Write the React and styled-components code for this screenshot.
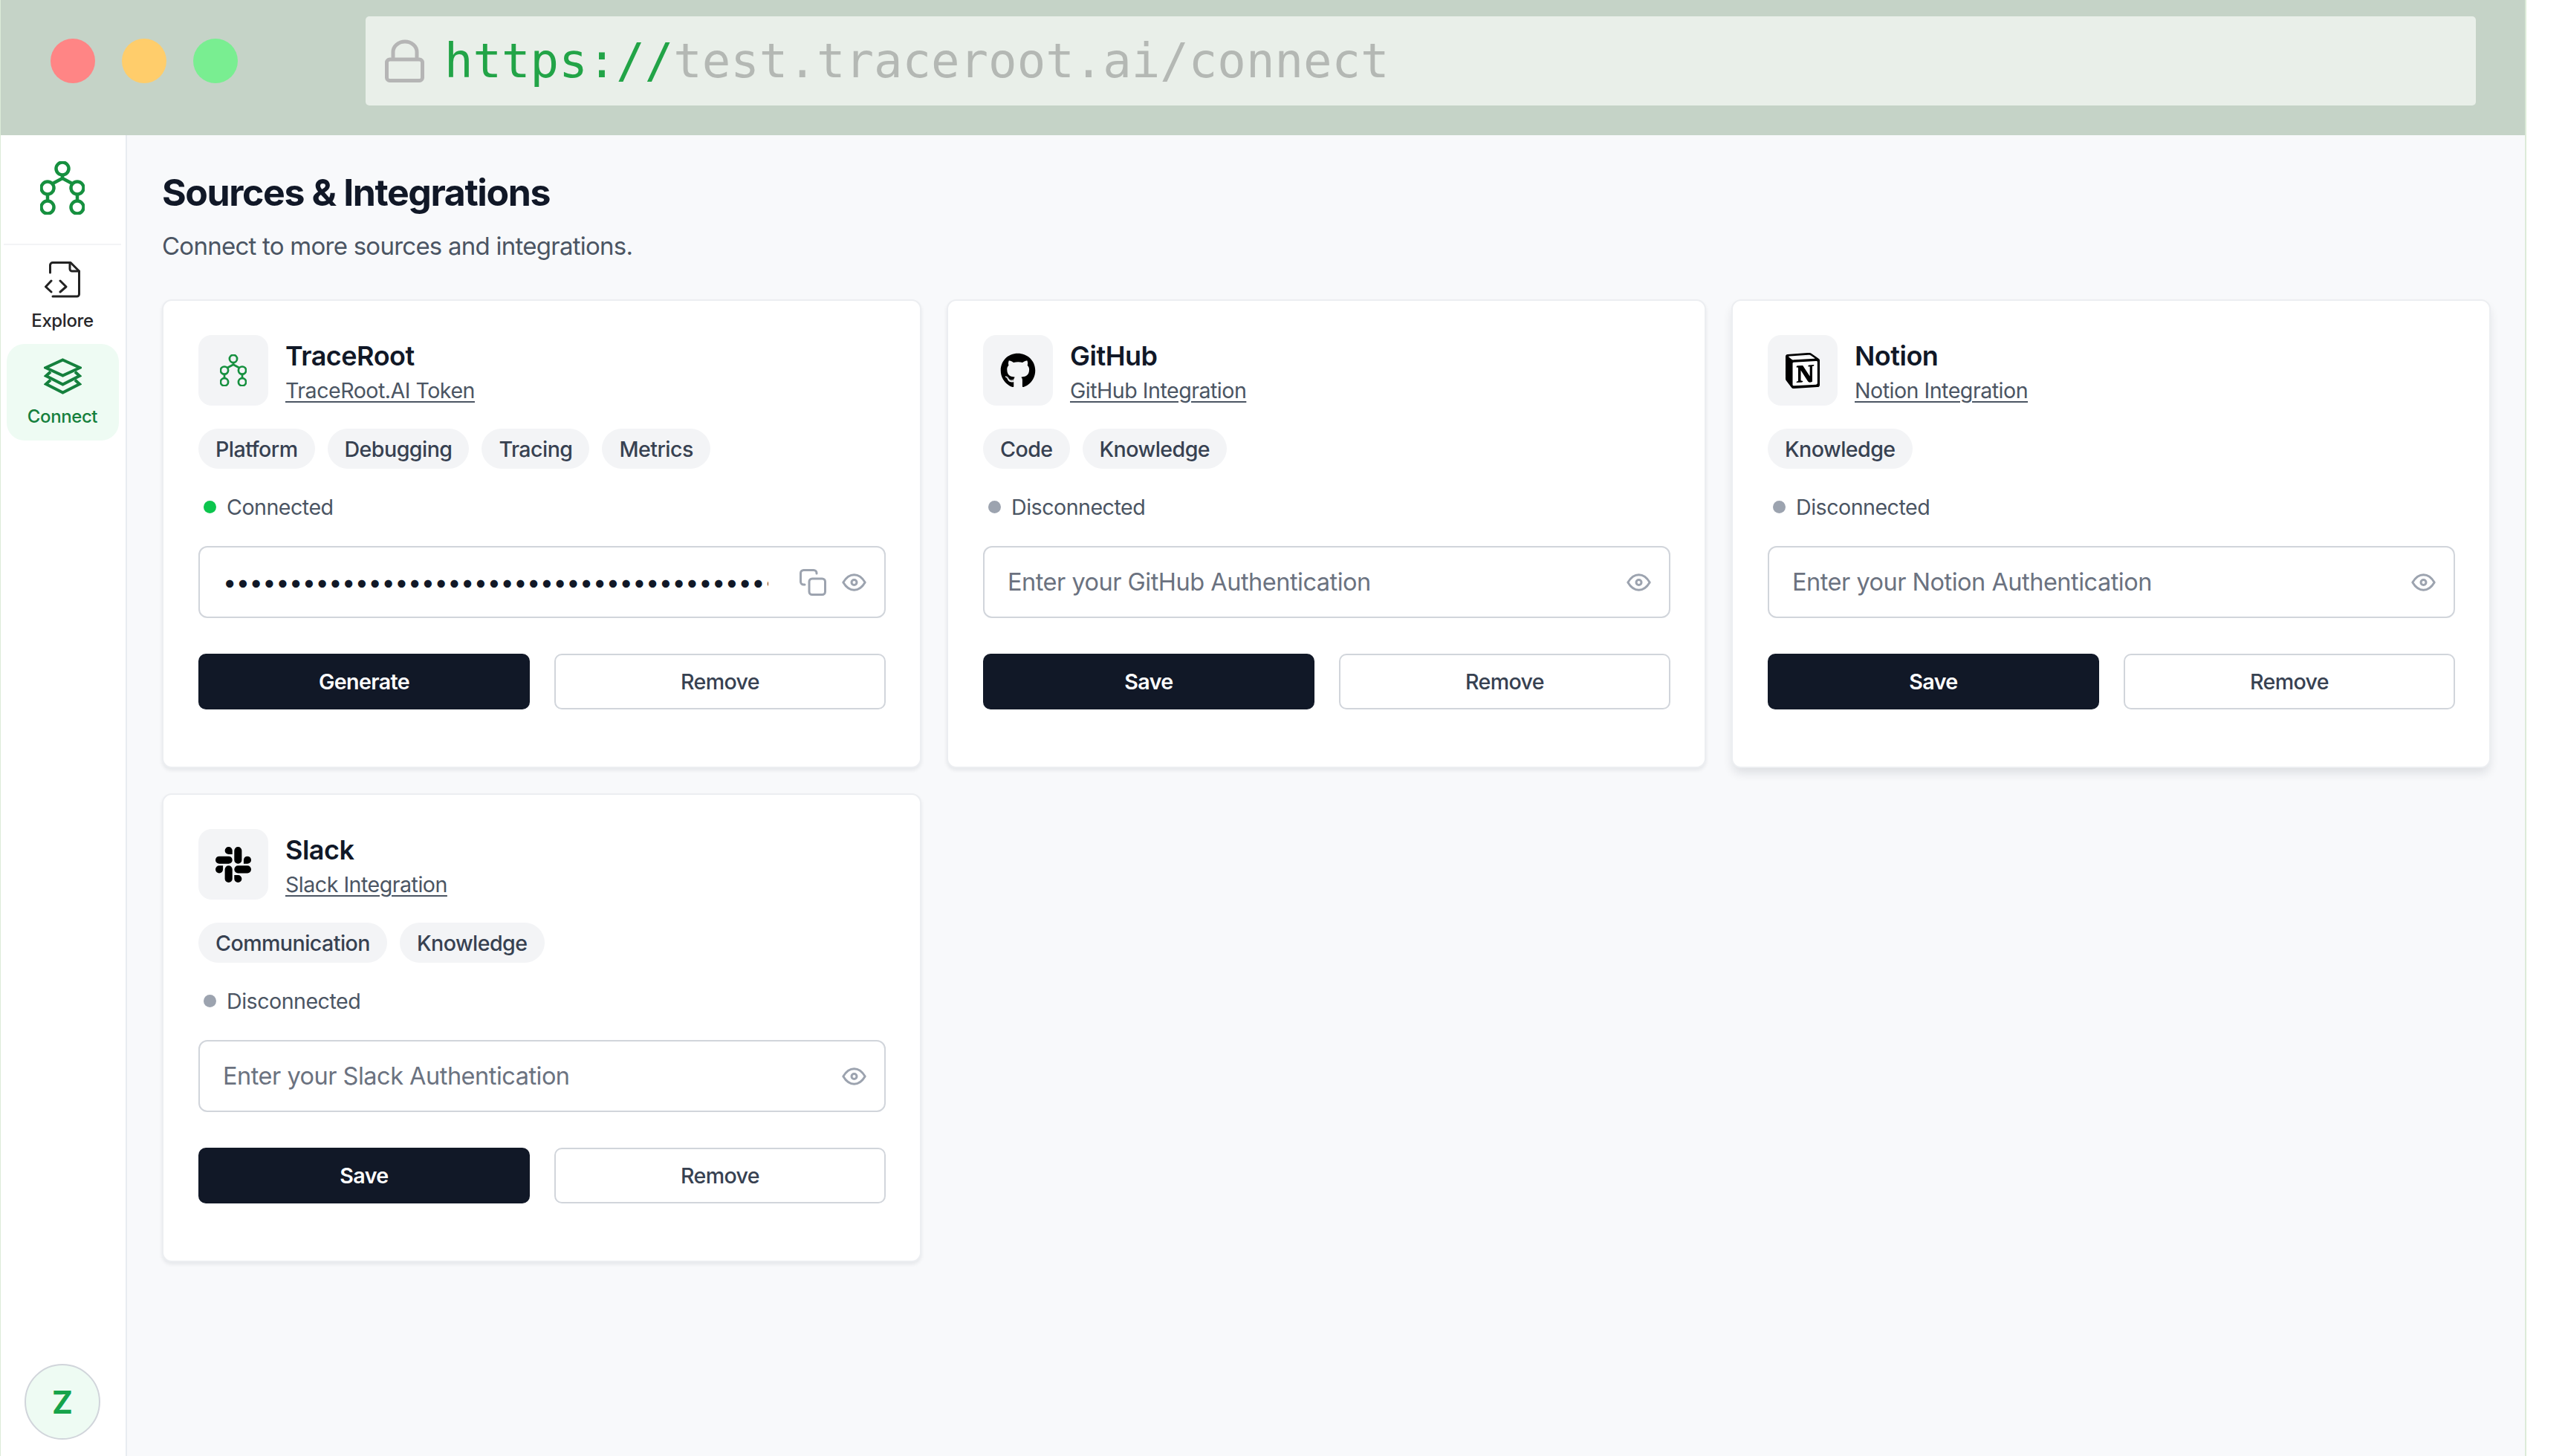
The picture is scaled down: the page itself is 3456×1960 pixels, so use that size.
import React from 'react';
import styled, { createGlobalStyle } from 'styled-components';
import { FaGithub } from 'react-icons/fa';
import { SiNotion, SiSlack } from 'react-icons/si';

const GlobalStyle = createGlobalStyle`
  html, body {
    margin: 0;
    padding: 0;
    background: #fff;
  }
  body {
    font-family: Inter, "Liberation Sans", sans-serif;
  }
  * {
    box-sizing: border-box;
  }
`

const Page = styled.div`
  width: 3456px;
  height: 1960px;
  background: #fff;
  overflow: hidden;
`
const Frame = styled.div`
  width: 3400px;
  height: 100%;
  display: flex;
  flex-direction: column;
  border-left: 1px solid #dcebd8;
  border-right: 2px solid #dcebd8;
`
const TopBar = styled.div`
  height: 182px;
  flex: none;
  display: flex;
  align-items: center;
  padding: 0 66px 18px 67px;
  background: #c5d3c7;
`
const Lights = styled.div`
  display: flex;
  gap: 36px;
  margin-right: 172px;
`
const Light = styled.span`
  width: 60px;
  height: 60px;
  border-radius: 50%;
  background: ${p => p.$color};
`
const AddressBar = styled.div`
  flex: 1;
  height: 120px;
  display: flex;
  align-items: center;
  gap: 27px;
  padding-left: 26px;
  background: #e9efe9;
  border-radius: 5px;
`
const Url = styled.div`
  font-family: "DejaVu Sans Mono", "Liberation Mono", monospace;
  font-size: 64px;
  color: #b4b8b4;
  white-space: nowrap;
`
const Scheme = styled.span`
  color: #22a447;
`
const Body = styled.div`
  flex: 1;
  display: flex;
  min-height: 0;
`
const Sidebar = styled.aside`
  width: 170px;
  flex: none;
  display: flex;
  flex-direction: column;
  align-items: center;
  padding-right: 2px;
  background: #fff;
  border-right: 2px solid #e8ecf1;
`
const LogoBlock = styled.div`
  width: 158px;
  height: 148px;
  padding-top: 35px;
  display: flex;
  justify-content: center;
  align-items: flex-start;
  border-bottom: 2px solid #f3f4f6;
`
const Nav = styled.nav`
  margin-top: 3px;
  display: flex;
  flex-direction: column;
`
const NavItem = styled.div`
  width: 151px;
  height: 130px;
  padding-top: 19px;
  display: flex;
  flex-direction: column;
  align-items: center;
  gap: 15px;
  border-radius: 24px;
  font-size: 24px;
  font-weight: 500;
  line-height: 30px;
  letter-spacing: -0.4px;
  color: ${p => (p.$active ? '#15803d' : '#27272a')};
  background: ${p => (p.$active ? '#eefbf3' : 'transparent')};
`
const Avatar = styled.div`
  width: 102px;
  height: 102px;
  margin-top: auto;
  margin-bottom: 22px;
  display: flex;
  align-items: center;
  justify-content: center;
  border-radius: 50%;
  border: 2px solid #d1d5db;
  background: #eefbf3;
  color: #16a34a;
  font-size: 42px;
  font-weight: 700;
`
const Main = styled.main`
  flex: 1;
  min-width: 0;
  padding: 47px 48px 0 47px;
  background: #f8f9fb;
`
const Title = styled.h1`
  margin: 0;
  font-size: 50px;
  line-height: 60px;
  font-weight: 700;
  letter-spacing: -1.4px;
  color: #111827;
`
const Subtitle = styled.p`
  margin: 22px 0 52px;
  font-size: 33px;
  line-height: 40px;
  letter-spacing: -0.75px;
  color: #4b5563;
`
const Grid = styled.div`
  display: grid;
  grid-template-columns: repeat(3, 1022px);
  gap: 34px;
  align-items: start;
`
const Card = styled.section`
  height: 631px;
  padding: 46px 46px 0 47px;
  background: #fff;
  border: 2px solid #eceef1;
  border-radius: 13px;
  box-shadow: ${p => (p.$raised
    ? '0 8px 14px -2px rgba(17, 24, 39, 0.12)'
    : '0 3px 5px rgba(17, 24, 39, 0.08)')};
`
const Header = styled.div`
  display: flex;
  gap: 23px;
  height: 95px;
`
const IconBox = styled.div`
  width: 94px;
  height: 95px;
  flex: none;
  display: flex;
  align-items: center;
  justify-content: center;
  background: #f3f4f6;
  border-radius: 18px;
  color: #000;
`
const NotionMark = styled.span`
  position: relative;
  display: flex;
  &::before {
    content: "";
    position: absolute;
    inset: 6px 5px 4px 6px;
    background: #fff;
  }
  svg {
    position: relative;
  }
`
const HeaderText = styled.div`
  display: flex;
  flex-direction: column;
  align-items: flex-start;
`
const Name = styled.h2`
  margin: 6px 0 0;
  font-size: 36px;
  line-height: 44px;
  font-weight: 600;
  letter-spacing: -0.5px;
  color: #111827;
`
const SubLink = styled.a`
  margin-top: 7px;
  font-size: 28.6px;
  line-height: 36px;
  letter-spacing: -0.5px;
  color: #4b5563;
  text-decoration: underline;
  text-underline-offset: 4px;
`
const Tags = styled.div`
  display: flex;
  gap: 17px;
  margin-top: 31px;
`
const Tag = styled.span`
  height: 54px;
  padding: 0 23px;
  display: flex;
  align-items: center;
  border-radius: 27px;
  background: #f3f4f6;
  font-size: 28.6px;
  font-weight: 500;
  letter-spacing: -0.55px;
  color: #374151;
`
const Status = styled.div`
  display: flex;
  align-items: center;
  gap: 14px;
  height: 40px;
  margin-top: 31px;
  padding-left: 7px;
  font-size: 28.6px;
  letter-spacing: -0.5px;
  color: #4b5563;
`
const Dot = styled.span`
  width: 17px;
  height: 17px;
  border-radius: 50%;
  background: ${p => (p.$on ? '#0cc54d' : '#9ca3af')};
`
const Field = styled.div`
  height: 97px;
  margin-top: 33px;
  padding: 0 24px 0 31px;
  display: flex;
  align-items: center;
  border: 2px solid #d1d5db;
  border-radius: 12px;
  background: #fff;
`
const Input = styled.input`
  flex: 1;
  min-width: 0;
  height: 60px;
  padding: 0;
  border: 0;
  outline: 0;
  background: transparent;
  font-family: inherit;
  font-size: 32.5px;
  letter-spacing: -0.5px;
  color: #111827;
  &::placeholder {
    color: #6b7280;
    opacity: 1;
  }
`
const FieldIcons = styled.div`
  display: flex;
  align-items: center;
  gap: 21px;
  margin-left: 42px;
  color: #9ca3af;
`
const Buttons = styled.div`
  display: grid;
  grid-template-columns: 1fr 1fr;
  gap: 33px;
  margin-top: 48px;
`
const Button = styled.button`
  height: 75px;
  padding: 0;
  font-family: inherit;
  font-size: 28.6px;
  letter-spacing: -0.6px;
  border-radius: 10px;
  font-weight: ${p => (p.$primary ? 600 : 500)};
  color: ${p => (p.$primary ? '#fff' : '#374151')};
  background: ${p => (p.$primary ? '#111827' : '#fff')};
  border: ${p => (p.$primary ? '0' : '2px solid #d1d5db')};
`

const LockIcon = () => (
  <svg width="53" height="58" viewBox="0 0 53 58" fill="none" stroke="#b5b5b5" strokeWidth="5">
    <path d="M11 27V17a16 14 0 0 1 32 0V27" />
    <rect x="2.5" y="27" width="48" height="28.5" rx="4" />
  </svg>
)

const TraceLogo = ({ width }) => (
  <svg width={width} viewBox="0 0 60 72" fill="none" stroke="#16903f" strokeWidth="4.5" style={{ display: 'block' }}>
    <circle cx="30" cy="10" r="8.5" />
    <circle cx="10" cy="36" r="8.5" />
    <circle cx="50" cy="36" r="8.5" />
    <circle cx="10" cy="62" r="8.5" />
    <circle cx="50" cy="62" r="8.5" />
    <path d="M30 18.5v4.5M30 23l-13 7M30 23l13 7M10 44.5v9M50 44.5v9" />
  </svg>
)

const ExploreIcon = () => (
  <svg width="48" height="50" viewBox="0 0 48 50" fill="none" stroke="#222" strokeWidth="3" strokeLinejoin="round" strokeLinecap="round">
    <path d="M7.5 15V5a3.5 3.5 0 0 1 3.5-3.5H35L46.5 13V44a3 3 0 0 1-3 3H11" />
    <path d="M34 1.5V10a3 3 0 0 0 3 3h9.5" />
    <path d="M9 26l-7.500 8L9 41M21 26l8 8-8 7" />
  </svg>
)

const ConnectIcon = () => (
  <svg width="51" height="49" viewBox="0 0 51 49" fill="none" stroke="#15803d" strokeWidth="4" strokeLinejoin="miter">
    <path d="M25.500 2.500L48.500 13 25.500 23.500 2.500 13z" />
    <path d="M9 18.500L3 24l22.500 11.500L48 24l-6-5.500" />
    <path d="M9 29.500L3 35l22.500 11.500L48 35l-6-5.500" />
  </svg>
)

const CopyIcon = () => (
  <svg width="36" height="36" viewBox="0 0 36 36" fill="none" stroke="currentColor" strokeWidth="3" strokeLinejoin="round" strokeLinecap="round">
    <rect x="13" y="13" width="21.500" height="21.500" rx="4" />
    <path d="M7 21H5.500a4 4 0 0 1-4-4V5.500a4 4 0 0 1 4-4H19a4 4 0 0 1 4 4V6" />
  </svg>
)

const EyeIcon = () => (
  <svg width="33" height="24" viewBox="0 0 33 24" fill="none" stroke="currentColor" strokeWidth="3" strokeLinejoin="round">
    <path d="M1.800 12C6 5 10.500 1.800 16.500 1.800S27 5 31.200 12C27 19 22.500 22.200 16.500 22.200S6 19 1.800 12z" />
    <circle cx="16.500" cy="12" r="3.500" />
  </svg>
)

const sources = [
  {
    name: 'TraceRoot',
    link: 'TraceRoot.AI Token',
    icon: <TraceLogo width={36} />,
    tags: ['Platform', 'Debugging', 'Tracing', 'Metrics'],
    connected: true,
    action: 'Generate',
    token: '•'.repeat(64),
  },
  {
    name: 'GitHub',
    link: 'GitHub Integration',
    icon: <FaGithub size={48} />,
    tags: ['Code', 'Knowledge'],
    action: 'Save',
  },
  {
    name: 'Notion',
    link: 'Notion Integration',
    icon: <NotionMark><SiNotion size={48} /></NotionMark>,
    tags: ['Knowledge'],
    action: 'Save',
    raised: true,
  },
  {
    name: 'Slack',
    link: 'Slack Integration',
    icon: <SiSlack size={48} />,
    tags: ['Communication', 'Knowledge'],
    action: 'Save',
  },
]

function SourceCard({ source }) {
  return (
    <Card $raised={source.raised}>
      <Header>
        <IconBox>{source.icon}</IconBox>
        <HeaderText>
          <Name>{source.name}</Name>
          <SubLink href="#">{source.link}</SubLink>
        </HeaderText>
      </Header>
      <Tags>
        {source.tags.map(tag => <Tag key={tag}>{tag}</Tag>)}
      </Tags>
      <Status>
        <Dot $on={source.connected} />
        {source.connected ? 'Connected' : 'Disconnected'}
      </Status>
      <Field>
        {source.token
          ? <Input type="password" readOnly value={source.token} />
          : <Input type="password" placeholder={`Enter your ${source.name} Authentication`} />}
        <FieldIcons>
          {source.token && <CopyIcon />}
          <EyeIcon />
        </FieldIcons>
      </Field>
      <Buttons>
        <Button $primary>{source.action}</Button>
        <Button>Remove</Button>
      </Buttons>
    </Card>
  )
}

function App() {
  return (
    <Page>
      <GlobalStyle />
      <Frame>
        <TopBar>
          <Lights>
            <Light $color="#ff8585" />
            <Light $color="#ffcd6b" />
            <Light $color="#79ee91" />
          </Lights>
          <AddressBar>
            <LockIcon />
            <Url><Scheme>https://</Scheme>test.traceroot.ai/connect</Url>
          </AddressBar>
        </TopBar>
        <Body>
          <Sidebar>
            <LogoBlock><TraceLogo width={60} /></LogoBlock>
            <Nav>
              <NavItem><ExploreIcon />Explore</NavItem>
              <NavItem $active><ConnectIcon />Connect</NavItem>
            </Nav>
            <Avatar>Z</Avatar>
          </Sidebar>
          <Main>
            <Title>Sources &amp; Integrations</Title>
            <Subtitle>Connect to more sources and integrations.</Subtitle>
            <Grid>
              {sources.map(source => <SourceCard key={source.name} source={source} />)}
            </Grid>
          </Main>
        </Body>
      </Frame>
    </Page>
  )
}

export default App
